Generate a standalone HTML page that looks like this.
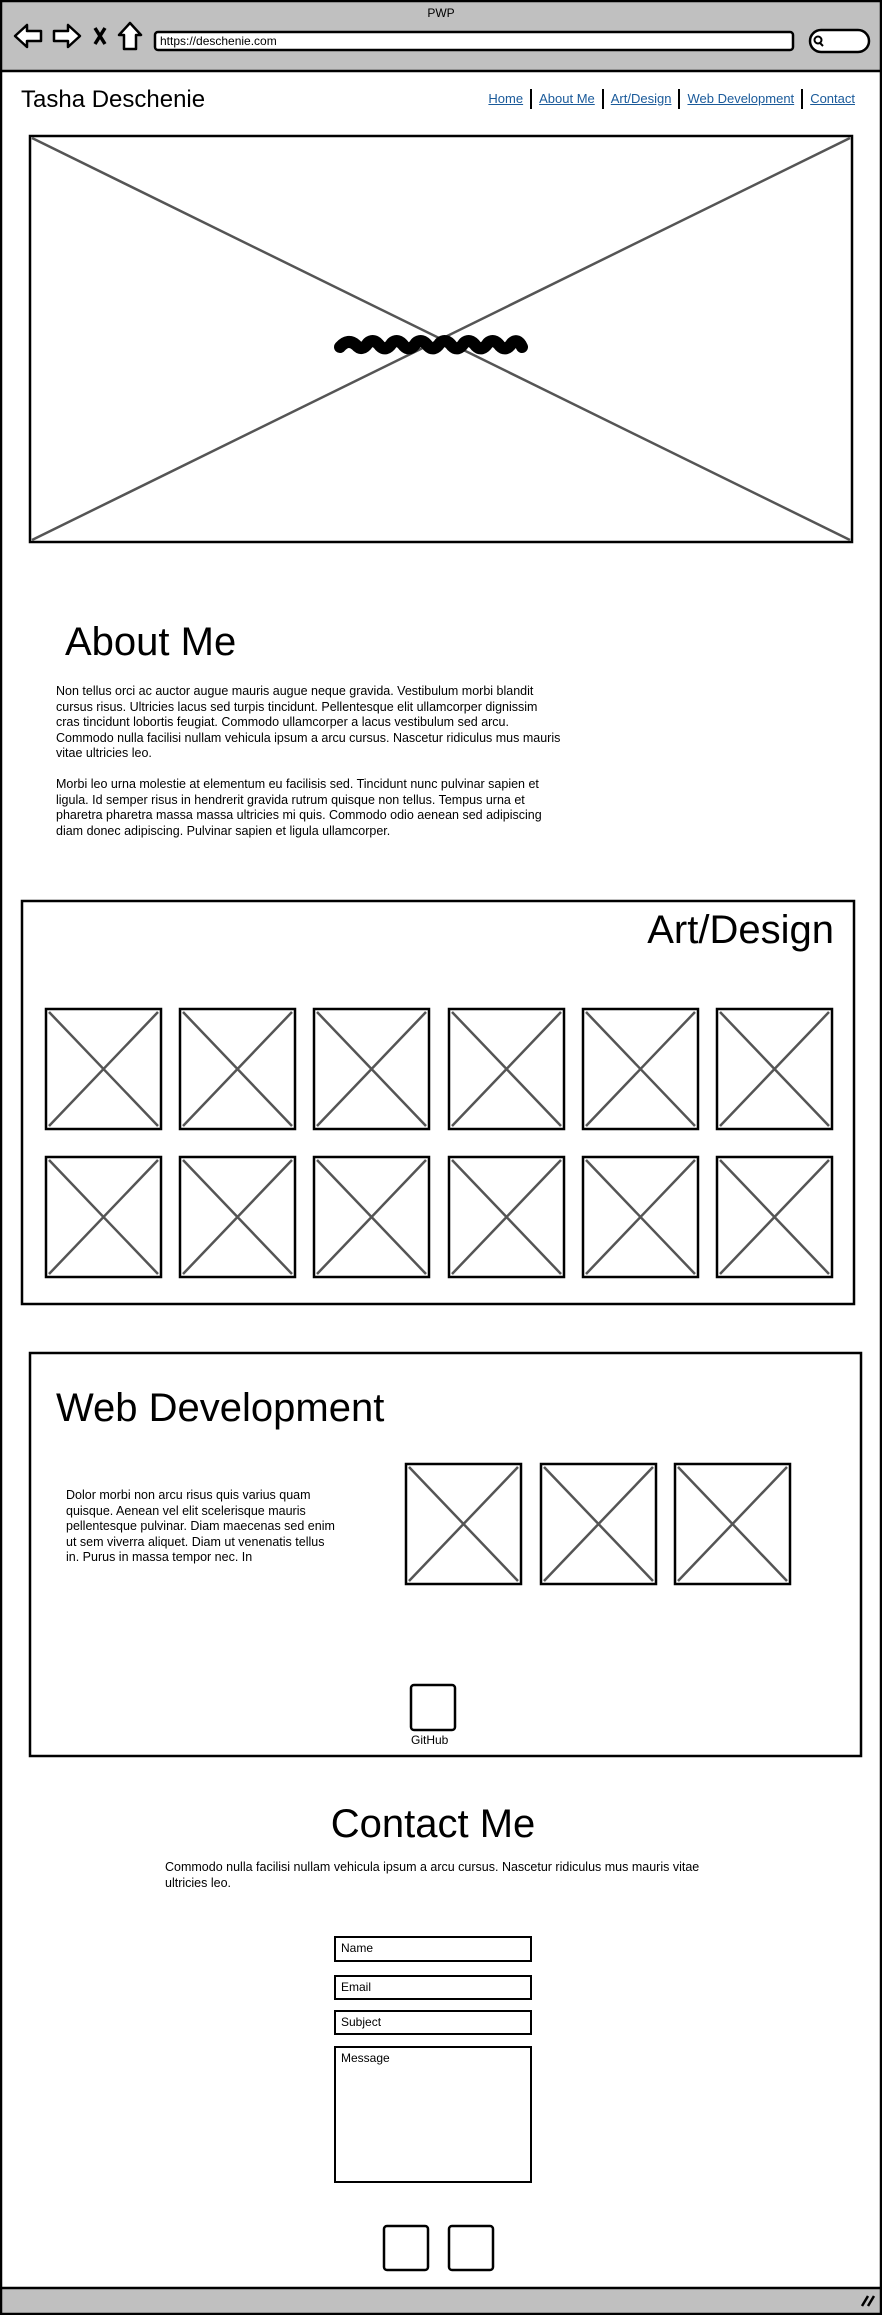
<!DOCTYPE html>
<html><head><meta charset="utf-8"><style>
*{margin:0;padding:0;box-sizing:border-box}
body{width:882px;height:2315px;position:relative;background:#fff;font-family:"Liberation Sans",sans-serif;color:#000;overflow:hidden}
.t{position:absolute;white-space:nowrap}
.p{position:absolute;font-size:12.5px;line-height:15.5px}
.nav a{color:#1a5a9a;text-decoration:underline;font-size:13px}
.nav span{display:inline-block;width:2px;height:20px;background:#000;vertical-align:middle;margin:0 7px}
.in{position:absolute;border:2.5px solid #000;font-size:12px;padding:3px 5px}
</style></head><body>
<svg width="882" height="2315" style="position:absolute;left:0;top:0">
<rect x="1" y="1" width="880" height="2313" fill="none" stroke="#000" stroke-width="2.5"/>
<rect x="1" y="1" width="880" height="70" fill="#c0c0c0" stroke="#000" stroke-width="2.5"/>
<path d="M15 36 L27 25 L27 31 L41 31 L41 41 L27 41 L27 47 Z" fill="#fff" stroke="#000" stroke-width="2.5" stroke-linejoin="round"/>
<path d="M80 36 L68 25 L68 31 L54 31 L54 41 L68 41 L68 47 Z" fill="#fff" stroke="#000" stroke-width="2.5" stroke-linejoin="round"/>
<path d="M95 28 L105 44 M105 28 L95 44" stroke="#000" stroke-width="3.5"/>
<path d="M130 23 L141 35 L136 35 L136 49 L124 49 L124 35 L119 35 Z" fill="#fff" stroke="#000" stroke-width="2.5" stroke-linejoin="round"/>
<rect x="155" y="32" width="638" height="18" rx="3" fill="#fff" stroke="#000" stroke-width="2.5"/>
<rect x="810" y="30" width="59" height="22" rx="11" fill="#fff" stroke="#000" stroke-width="2.5"/>
<circle cx="818" cy="40" r="3.5" fill="none" stroke="#000" stroke-width="2"/><path d="M820 43 L823 46" stroke="#000" stroke-width="2"/>
<rect x="30" y="136" width="822" height="406" fill="none" stroke="#000" stroke-width="2.5"/>
<path d="M32 138 L850 540 M850 138 L32 540" stroke="#555" stroke-width="2.5"/>
<path d="M340 347 Q348 338 356 345 Q362 352 368 343 Q374 338 380 346 Q386 352 392 343 Q398 338 404 346 Q410 352 416 343 Q422 338 428 346 Q434 352 440 343 Q446 338 452 346 Q458 352 464 343 Q470 338 476 346 Q482 352 488 343 Q494 338 500 346 Q506 352 512 343 Q518 338 522 347" fill="none" stroke="#000" stroke-width="12" stroke-linecap="round" stroke-linejoin="round"/>
<rect x="22" y="901" width="832" height="403" fill="none" stroke="#000" stroke-width="2.5"/>
<g id="row" stroke-width="2.5">
<g><rect x="46" y="1009" width="115" height="120" fill="none" stroke="#000"/><path d="M49 1012 L158 1126 M158 1012 L49 1126" stroke="#555"/></g>
<g transform="translate(134,0)"><rect x="46" y="1009" width="115" height="120" fill="none" stroke="#000"/><path d="M49 1012 L158 1126 M158 1012 L49 1126" stroke="#555"/></g>
<g transform="translate(268,0)"><rect x="46" y="1009" width="115" height="120" fill="none" stroke="#000"/><path d="M49 1012 L158 1126 M158 1012 L49 1126" stroke="#555"/></g>
<g transform="translate(403,0)"><rect x="46" y="1009" width="115" height="120" fill="none" stroke="#000"/><path d="M49 1012 L158 1126 M158 1012 L49 1126" stroke="#555"/></g>
<g transform="translate(537,0)"><rect x="46" y="1009" width="115" height="120" fill="none" stroke="#000"/><path d="M49 1012 L158 1126 M158 1012 L49 1126" stroke="#555"/></g>
<g transform="translate(671,0)"><rect x="46" y="1009" width="115" height="120" fill="none" stroke="#000"/><path d="M49 1012 L158 1126 M158 1012 L49 1126" stroke="#555"/></g>
</g>
<use href="#row" transform="translate(0,148)"/>
<rect x="30" y="1353" width="831" height="403" fill="none" stroke="#000" stroke-width="2.5"/>
<g stroke-width="2.5">
<g transform="translate(360,455)"><rect x="46" y="1009" width="115" height="120" fill="none" stroke="#000"/><path d="M49 1012 L158 1126 M158 1012 L49 1126" stroke="#555"/></g>
<g transform="translate(495,455)"><rect x="46" y="1009" width="115" height="120" fill="none" stroke="#000"/><path d="M49 1012 L158 1126 M158 1012 L49 1126" stroke="#555"/></g>
<g transform="translate(629,455)"><rect x="46" y="1009" width="115" height="120" fill="none" stroke="#000"/><path d="M49 1012 L158 1126 M158 1012 L49 1126" stroke="#555"/></g>
</g>
<rect x="411" y="1685" width="44" height="45" rx="3" fill="none" stroke="#000" stroke-width="2.5"/>
<rect x="384" y="2226" width="44" height="44" rx="3" fill="none" stroke="#000" stroke-width="2.5"/>
<rect x="449" y="2226" width="44" height="44" rx="3" fill="none" stroke="#000" stroke-width="2.5"/>
<rect x="1" y="2288" width="880" height="26" fill="#c0c0c0" stroke="#000" stroke-width="2.5"/>
<path d="M862 2306 L868 2296 M868 2306 L874 2296" stroke="#000" stroke-width="2.5"/>
</svg>
<div class="t" style="left:0;width:882px;text-align:center;top:6px;font-size:12px">PWP</div>
<div class="t" style="left:160px;top:34px;font-size:12px">https://deschenie.com</div>
<div class="t" style="left:21px;top:86px;font-size:24px">Tasha Deschenie</div>
<div class="t nav" style="right:27px;top:89px"><a>Home</a><span></span><a>About Me</a><span></span><a>Art/Design</a><span></span><a>Web Development</a><span></span><a>Contact</a></div>
<div class="t" style="left:65px;top:620px;font-size:40px">About Me</div>
<div class="p" style="left:56px;top:684px;width:505px">Non tellus orci ac auctor augue mauris augue neque gravida. Vestibulum morbi blandit cursus risus. Ultricies lacus sed turpis tincidunt. Pellentesque elit ullamcorper dignissim cras tincidunt lobortis feugiat. Commodo ullamcorper a lacus vestibulum sed arcu. Commodo nulla facilisi nullam vehicula ipsum a arcu cursus. Nascetur ridiculus mus mauris vitae ultricies leo.<br><br>Morbi leo urna molestie at elementum eu facilisis sed. Tincidunt nunc pulvinar sapien et ligula. Id semper risus in hendrerit gravida rutrum quisque non tellus. Tempus urna et pharetra pharetra massa massa ultricies mi quis. Commodo odio aenean sed adipiscing diam donec adipiscing. Pulvinar sapien et ligula ullamcorper.</div>
<div class="t" style="right:48px;top:908px;font-size:40px">Art/Design</div>
<div class="t" style="left:56px;top:1386px;font-size:40px">Web Development</div>
<div class="p" style="left:66px;top:1488px;width:275px;line-height:15.5px">Dolor morbi non arcu risus quis varius quam quisque. Aenean vel elit scelerisque mauris pellentesque pulvinar. Diam maecenas sed enim ut sem viverra aliquet. Diam ut venenatis tellus in. Purus in massa tempor nec. In</div>
<div class="t" style="left:411px;top:1733px;font-size:12px">GitHub</div>
<div class="t" style="left:0;width:866px;text-align:center;top:1802px;font-size:40px">Contact Me</div>
<div class="p" style="left:165px;top:1860px;width:545px">Commodo nulla facilisi nullam vehicula ipsum a arcu cursus. Nascetur ridiculus mus mauris vitae ultricies leo.</div>
<div class="in" style="left:334px;top:1936px;width:198px;height:26px">Name</div>
<div class="in" style="left:334px;top:1975px;width:198px;height:25px">Email</div>
<div class="in" style="left:334px;top:2010px;width:198px;height:25px">Subject</div>
<div class="in" style="left:334px;top:2046px;width:198px;height:137px">Message</div>
</body></html>
